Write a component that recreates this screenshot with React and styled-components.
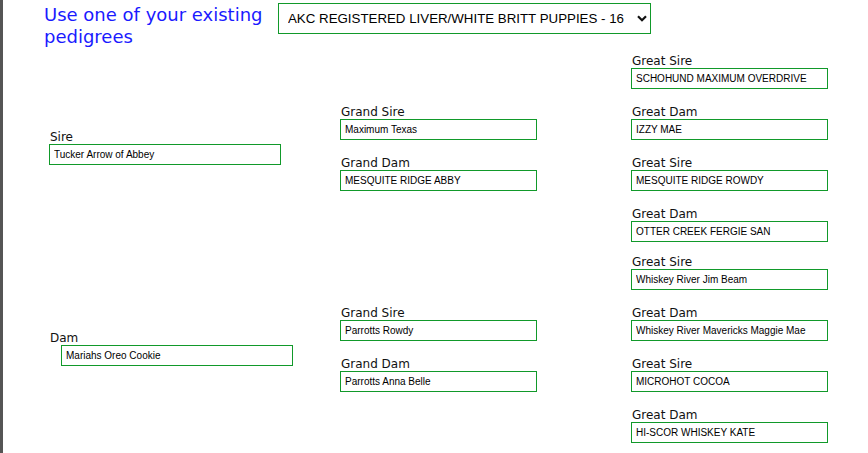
import React from 'react';
import styled, { createGlobalStyle } from 'styled-components';

const GlobalStyle = createGlobalStyle`
  html, body {
    margin: 0;
    padding: 0;
    background: #fff;
  }
`;

const Page = styled.div`
  min-height: 453px;
  border-left: 3px solid #555;
  box-sizing: border-box;
  font-family: "DejaVu Sans", Verdana, sans-serif;
  color: #111;
  overflow: hidden;
`;

const Header = styled.div`
  display: flex;
  align-items: flex-start;
  height: 48px;
`;

const Heading = styled.h2`
  margin: 4px 0 0 41px;
  width: 230px;
  font-size: 18px;
  line-height: 22px;
  font-weight: normal;
  color: #1a1aff;
`;

const SelectWrap = styled.div`
  position: relative;
  margin: 3px 0 0 4px;
`;

const Select = styled.select`
  appearance: none;
  -webkit-appearance: none;
  width: 373px;
  height: 31px;
  box-sizing: border-box;
  border: 1px solid #11992a;
  border-radius: 0;
  background: #fff;
  padding: 0 22px 0 9px;
  font-family: "Liberation Sans", Arial, sans-serif;
  font-size: 13.3px;
  color: #000;
  outline: none;
`;

const Chevron = styled.svg`
  position: absolute;
  right: 4px;
  top: 12px;
  pointer-events: none;
`;

const Tree = styled.div`
  display: grid;
  grid-template-columns: 291px 291px 197px;
  padding-left: 46px;
  margin-top: 4px;
`;

const Column = styled.div`
  display: flex;
  flex-direction: column;
  padding-top: ${(p) => p.$top || 0}px;
`;

const Field = styled.div`
  display: flex;
  flex-direction: column;
  margin-bottom: ${(p) => (p.$after !== undefined ? p.$after : 14)}px;
`;

const Label = styled.label`
  font-size: 12px;
  line-height: 19px;
  height: 16px;
  padding-left: 1px;
  color: #111;
`;

const Input = styled.input`
  box-sizing: border-box;
  width: ${(p) => p.$width}px;
  height: 21px;
  margin-left: ${(p) => p.$indent || 0}px;
  border: 1px solid #11992a;
  border-radius: 0;
  padding: 0 4px;
  font-family: "Liberation Sans", Arial, sans-serif;
  font-size: 10px;
  color: #000;
  background: #fff;
  outline: none;
`;

const greats = [
  ['Great Sire', 'SCHOHUND MAXIMUM OVERDRIVE'],
  ['Great Dam', 'IZZY MAE'],
  ['Great Sire', 'MESQUITE RIDGE ROWDY'],
  ['Great Dam', 'OTTER CREEK FERGIE SAN'],
  ['Great Sire', 'Whiskey River Jim Beam'],
  ['Great Dam', 'Whiskey River Mavericks Maggie Mae'],
  ['Great Sire', 'MICROHOT COCOA'],
  ['Great Dam', 'HI-SCOR WHISKEY KATE'],
];

function Entry({ label, value, width, indent, after }) {
  return (
    <Field $after={after}>
      <Label>{label}</Label>
      <Input $width={width} $indent={indent} defaultValue={value} readOnly />
    </Field>
  );
}

export default function App() {
  return (
    <Page>
      <GlobalStyle />
      <Header>
        <Heading>Use one of your existing pedigrees</Heading>
        <SelectWrap>
          <Select defaultValue="akc">
            <option value="akc">AKC REGISTERED LIVER/WHITE BRITT PUPPIES - 16</option>
          </Select>
          <Chevron width="10" height="7" viewBox="0 0 10 7">
            <path d="M1 1.2 L5 5.2 L9 1.2" fill="none" stroke="#111" strokeWidth="2.2" />
          </Chevron>
        </SelectWrap>
      </Header>
      <Tree>
        <Column $top={76}>
          <Entry label="Sire" value="Tucker Arrow of Abbey" width={232} after={164} />
          <Entry label="Dam" value="Mariahs Oreo Cookie" width={232} indent={12} />
        </Column>
        <Column $top={51}>
          <Entry label="Grand Sire" value="Maximum Texas" width={197} />
          <Entry label="Grand Dam" value="MESQUITE RIDGE ABBY" width={197} after={113} />
          <Entry label="Grand Sire" value="Parrotts Rowdy" width={197} />
          <Entry label="Grand Dam" value="Parrotts Anna Belle" width={197} />
        </Column>
        <Column>
          {greats.map(([label, value], i) => (
            <Entry
              key={i}
              label={label}
              value={value}
              width={197}
              after={i === 3 ? 11 : 14}
            />
          ))}
        </Column>
      </Tree>
    </Page>
  );
}
